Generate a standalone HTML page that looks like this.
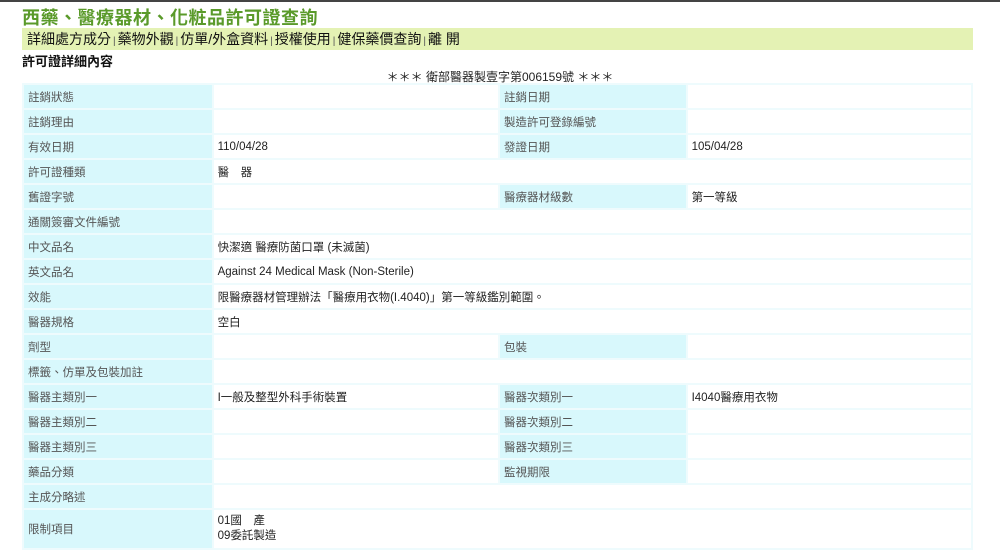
<!DOCTYPE html>
<html><head><meta charset="utf-8"><style>
*{margin:0;padding:0;box-sizing:border-box}
body{width:1000px;height:550px;overflow:hidden;background:#fff;font-family:"Liberation Sans","Noto Sans CJK TC",sans-serif;position:relative}
.topline{position:absolute;left:0;top:0;width:1000px;height:2px;background:#444}
.title{position:absolute;left:22px;top:4px;font-size:18px;font-weight:bold;color:#5a9a2a;letter-spacing:0.5px}
.nav{position:absolute;left:22px;top:28px;width:951px;height:22px;background:#e4f2b4;font-size:14px;color:#111;padding-left:5px;line-height:22px}
.nav .s{font-size:10px;color:#555;margin:0 2px}
.sub{position:absolute;left:22px;top:51px;font-size:13px;font-weight:bold;color:#111}
.cap{position:absolute;left:0;width:1000px;text-align:center;top:68px;font-size:12px;color:#222}
table{position:absolute;left:22px;top:83px;width:951px;border-collapse:collapse;font-size:11.5px}
td{height:25px;border:2px solid #eefbfd;padding:0 4px;vertical-align:middle;color:#222}
td.l{background:#d8f8fc;color:#555}
</style></head><body>
<div class="topline"></div>
<div class="title">西藥、醫療器材、化粧品許可證查詢</div>
<div class="nav">詳細處方成分<span class="s">|</span>藥物外觀<span class="s">|</span>仿單/外盒資料<span class="s">|</span>授權使用<span class="s">|</span>健保藥價查詢<span class="s">|</span>離 開</div>
<div class="sub">許可證詳細內容</div>
<div class="cap">＊＊＊ 衛部醫器製壹字第006159號 ＊＊＊</div>
<table>
<colgroup><col style="width:190px"><col style="width:287px"><col style="width:188px"><col style="width:286px"></colgroup>
<tr><td class="l">註銷狀態</td><td></td><td class="l">註銷日期</td><td></td></tr>
<tr><td class="l">註銷理由</td><td></td><td class="l">製造許可登錄編號</td><td></td></tr>
<tr><td class="l">有效日期</td><td>110/04/28</td><td class="l">發證日期</td><td>105/04/28</td></tr>
<tr><td class="l">許可證種類</td><td colspan="3">醫　器</td></tr>
<tr><td class="l">舊證字號</td><td></td><td class="l">醫療器材級數</td><td>第一等級</td></tr>
<tr><td class="l">通關簽審文件編號</td><td colspan="3"></td></tr>
<tr><td class="l">中文品名</td><td colspan="3">快潔適 醫療防菌口罩 (未滅菌)</td></tr>
<tr><td class="l">英文品名</td><td colspan="3">Against 24 Medical Mask (Non-Sterile)</td></tr>
<tr><td class="l">效能</td><td colspan="3">限醫療器材管理辦法「醫療用衣物(I.4040)」第一等級鑑別範圍。</td></tr>
<tr><td class="l">醫器規格</td><td colspan="3">空白</td></tr>
<tr><td class="l">劑型</td><td></td><td class="l">包裝</td><td></td></tr>
<tr><td class="l">標籤、仿單及包裝加註</td><td colspan="3"></td></tr>
<tr><td class="l">醫器主類別一</td><td>I一般及整型外科手術裝置</td><td class="l">醫器次類別一</td><td>I4040醫療用衣物</td></tr>
<tr><td class="l">醫器主類別二</td><td></td><td class="l">醫器次類別二</td><td></td></tr>
<tr><td class="l">醫器主類別三</td><td></td><td class="l">醫器次類別三</td><td></td></tr>
<tr><td class="l">藥品分類</td><td></td><td class="l">監視期限</td><td></td></tr>
<tr><td class="l">主成分略述</td><td colspan="3"></td></tr>
<tr><td class="l" style="height:40px">限制項目</td><td colspan="3" style="line-height:15px">01國　產<br>09委託製造</td></tr>
</table>
</body></html>
